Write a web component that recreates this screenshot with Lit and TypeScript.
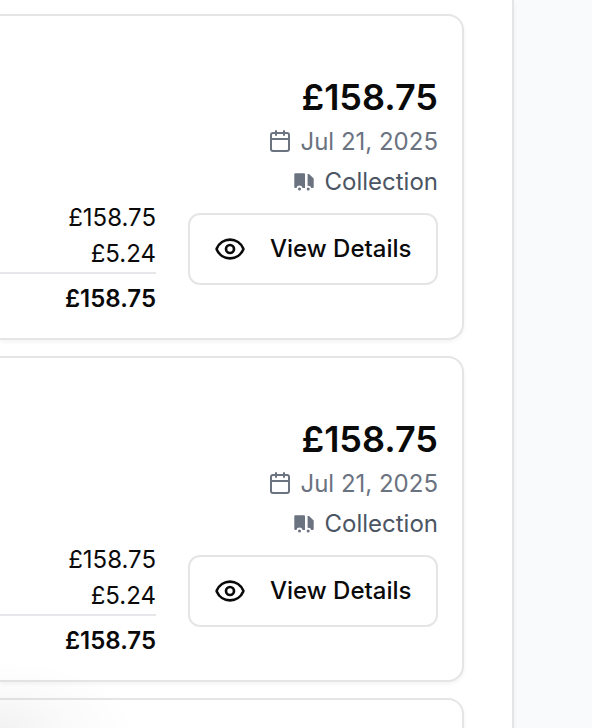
import { LitElement, html, css, svg, nothing } from "lit";
import { customElement, property, state } from "lit/decorators.js";

interface Order {
  total: string;
  subtotal: string;
  fee: string;
  date: string;
  method: string;
}

const calendarIcon = svg`
  <svg class="icon" viewBox="0 0 24 24" width="24" height="24" fill="none" stroke="currentColor" stroke-width="2" stroke-linecap="round" stroke-linejoin="round" aria-hidden="true">
    <path d="M8 1v4M16 1v4M3 9h18" /><rect x="3" y="3" width="18" height="18" rx="2" />
  </svg>`;

const truckIcon = svg`
  <svg class="icon" viewBox="0 0 24 24" width="24" height="24" aria-hidden="true">
    <path fill="currentColor" d="M2.300 3.300H11Q12 3.300 12 4.300V18H9.600A3.200 3.200 0 0 0 3.400 18H2.300Q1.300 18 1.300 17V4.300Q1.300 3.300 2.300 3.300Z" />
    <path fill="currentColor" d="M14.600 3.900H16L20.700 8.500V17Q20.700 18 19.700 18H18.300A3.200 3.200 0 0 0 14.600 15.900Z" />
    <circle cx="6.500" cy="19" r="1.500" fill="currentColor" />
    <circle cx="15.200" cy="19" r="1.500" fill="currentColor" />
  </svg>`;

const eyeIcon = svg`
  <svg class="icon" viewBox="0 0 24 24" width="32" height="32" fill="none" stroke="currentColor" stroke-width="2" stroke-linecap="round" stroke-linejoin="round" aria-hidden="true">
    <path d="M2.062 12.348a1 1 0 0 1 0-.696 10.750 10.750 0 0 1 19.876 0 1 1 0 0 1 0 .696 10.750 10.750 0 0 1-19.876 0" /><circle cx="12" cy="12" r="3" />
  </svg>`;

@customElement("order-card")
export class OrderCard extends LitElement {
  @property({ attribute: false }) order: Order | null = null;

  static styles = css`
    :host {
      display: flex;
      align-items: flex-end;
      gap: 32px;
      box-sizing: border-box;
      min-height: 240px;
      padding: 62px 24px 20px 0;
      border: 2px solid #e5e5e5;
      border-left: 0;
      border-radius: 0 16px 16px 0;
      background: #fff;
      box-shadow: 0 2px 4px rgb(0 0 0 / 5%);
      font-size: 24px;
      line-height: 36px;
      color: #0a0a0a;
    }
    .amounts {
      flex: 1;
      padding-bottom: 1px;
      text-align: right;
    }
    .total {
      padding-top: 7px;
      border-top: 2px solid #e5e7eb;
      font-weight: 600;
    }
    .summary {
      display: flex;
      flex-direction: column;
      align-items: flex-end;
      gap: 8px;
      padding-bottom: 33px;
      line-height: 32px;
    }
    .price {
      padding-bottom: 2px;
      font-size: 36px;
      line-height: 38px;
      font-weight: 600;
    }
    .meta {
      display: flex;
      align-items: center;
      gap: 8px;
      color: #6b7280;
    }
    .method {
      color: #4b5563;
    }
    .method .icon {
      color: #6b7280;
    }
    .icon {
      display: block;
      flex: none;
    }
    .view {
      display: flex;
      align-items: center;
      gap: 24px;
      box-sizing: border-box;
      min-width: 250px;
      height: 72px;
      margin: 7px 0 0;
      padding: 0 24px;
      border: 2px solid #e5e5e5;
      border-radius: 12px;
      background: #fff;
      color: inherit;
      font: inherit;
      font-weight: 500;
      white-space: nowrap;
    }
  `;

  render() {
    const o = this.order;
    if (!o) return nothing;
    return html`
      <div class="amounts">
        <div>${o.subtotal}</div>
        <div>${o.fee}</div>
        <div class="total">${o.total}</div>
      </div>
      <div class="summary">
        <div class="price">${o.total}</div>
        <div class="meta">${calendarIcon}<span>${o.date}</span></div>
        <div class="meta method">${truckIcon}<span>${o.method}</span></div>
        <button class="view" type="button">${eyeIcon}<span>View Details</span></button>
      </div>
    `;
  }
}

@customElement("app-root")
export class AppRoot extends LitElement {
  @state() private orders: Order[] = Array.from({ length: 2 }, () => ({
    total: "£158.75",
    subtotal: "£158.75",
    fee: "£5.24",
    date: "Jul 21, 2025",
    method: "Collection",
  }));

  static styles = css`
    :host {
      display: block;
      position: relative;
      height: 100vh;
      overflow: hidden;
      box-sizing: border-box;
      padding-right: 78px;
      background: #f8fafc;
      font-family: Inter, "Liberation Sans", sans-serif;
      font-optical-sizing: none;
    }
    .panel {
      display: flex;
      flex-direction: column;
      gap: 16px;
      padding: 14px 48px 14px 0;
      border-right: 2px solid #e5e5e5;
      background: #fff;
      box-shadow: 0 2px 4px rgb(0 0 0 / 5%);
    }
    .shade {
      position: absolute;
      left: 0;
      bottom: 0;
      width: 136px;
      height: 68px;
      background: radial-gradient(ellipse farthest-side at bottom left, rgb(0 0 0 / 5%), rgb(0 0 0 / 2%) 50%, transparent);
      pointer-events: none;
    }
  `;

  render() {
    return html`
      <main class="panel">
        ${this.orders.map((o) => html`<order-card .order=${o}></order-card>`)}
        <order-card></order-card>
      </main>
      <div class="shade"></div>
    `;
  }
}
